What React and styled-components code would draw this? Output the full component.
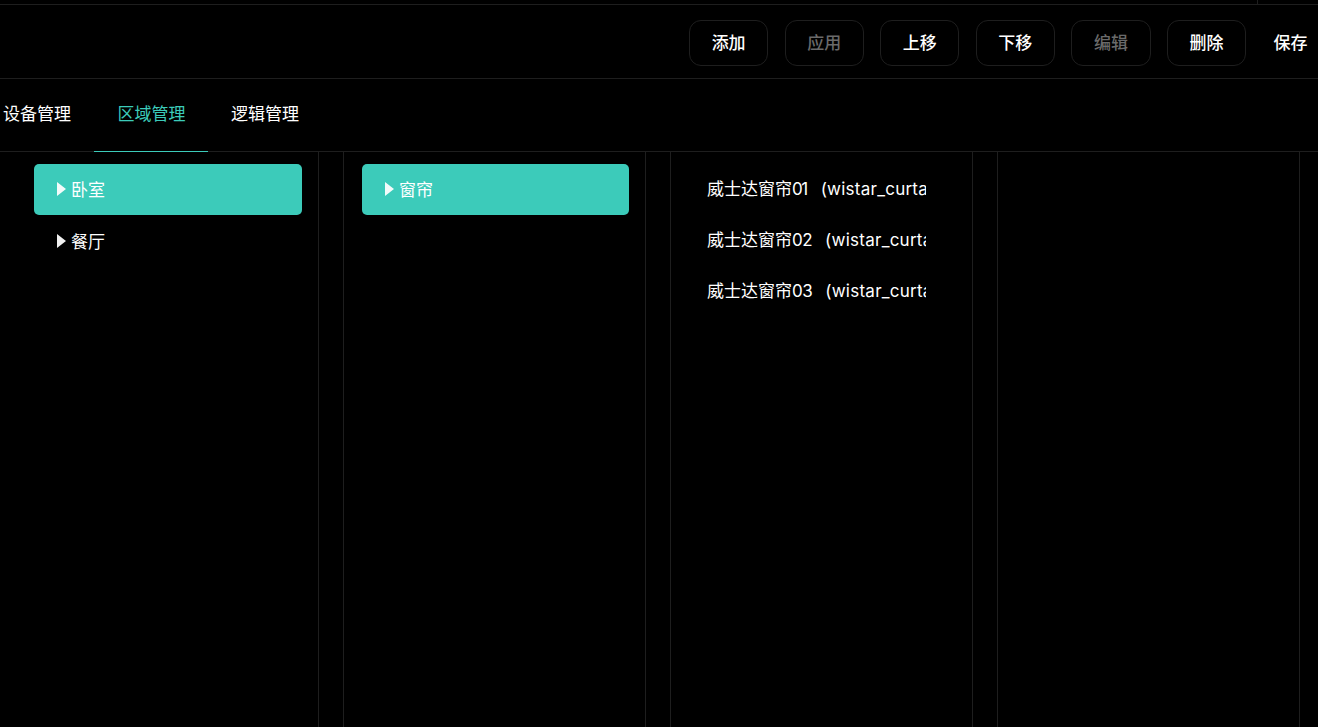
import React from "react";
import styled, { createGlobalStyle } from "styled-components";

const Global = createGlobalStyle`
  html, body { margin: 0; padding: 0; background: #000; height: 100%; overflow: hidden; }
  #root { height: 100%; }
  * { box-sizing: border-box; }
`;
const LINE = "#1e1e1e";
const TEAL = "#3ccbba";
const FONT = `"Inter", "Noto Sans CJK SC", sans-serif`;

const Page = styled.div`
  width: 1318px; height: 727px; background: #000; color: #fff;
  font-family: ${FONT}; font-size: 17px;
  display: flex; flex-direction: column; overflow: hidden;
`;
const TopStrip = styled.div`
  height: 5px; border-bottom: 1px solid ${LINE};
  display: flex; justify-content: flex-end; flex: none;
`;
const StripTick = styled.div`
  width: 1px; height: 4px; background: ${LINE}; margin-right: 60px;
`;
const Toolbar = styled.div`
  height: 74px; flex: none; border-bottom: 1px solid ${LINE};
  display: flex; align-items: flex-start; justify-content: flex-end;
  gap: 16.4px; padding: 15px 10.5px 0 0;
`;
const ToolButton = styled.button`
  width: 79.2px; height: 46px; border-radius: 12px;
  background: transparent; border: 1px solid ${LINE};
  color: ${p => (p.$disabled ? "#6a6a6a" : "#fff")};
  font: inherit; font-weight: 500; padding: 0 0 4px;
`;
const SaveButton = styled.button`
  background: transparent; border: 0; padding: 0 0 4px; margin-left: 11px; height: 46px; color: #fff;
  font: inherit; font-weight: 500;
`;
const Tabs = styled.div`
  height: 73px; flex: none; border-bottom: 1px solid ${LINE};
  display: flex; padding-left: 3px;
`;
const Tab = styled.div`
  position: relative; height: 73px; display: flex; align-items: center; flex: none;
  margin-right: ${p => p.$gap}px; padding-bottom: 7px;
  color: ${p => (p.$active ? TEAL : "#fff")};
  ${p => p.$active && `
    &::after { content: ""; position: absolute; left: -23.5px; right: -22.5px; bottom: 0;
      height: 1px; background: ${TEAL}; }
  `}
`;
const Columns = styled.div`
  flex: 1; display: flex; min-height: 0;
`;
const Column = styled.div`
  flex: none; width: ${p => p.$w}px; margin-right: ${p => p.$mr || 0}px;
  border-right: 1px solid ${LINE};
  border-left: ${p => (p.$first ? "none" : `1px solid ${LINE}`)};
  padding: 12px 16px 0 ${p => p.$pl}px;
`;
const TreeItem = styled.div`
  height: 51px; border-radius: 5px; display: flex; align-items: center; gap: 5px;
  padding: 0 0 2px 23px; margin-bottom: 1px; color: #fff;
  background: ${p => (p.$active ? TEAL : "transparent")};
`;
const Caret = styled.svg`
  width: 9px; height: 14px; flex: none; fill: currentColor; opacity: .94;
`;
const DeviceList = styled.div`
  width: 219px; overflow: hidden;
`;
const Device = styled.div`
  height: 51px; line-height: 52px; white-space: nowrap; overflow: hidden;
  margin-top: ${p => (p.$first ? "-1px" : "0")};
`;
const Digits = styled.span`
  letter-spacing: ${p => p.$tight}px;
`;
const DeviceId = styled.span`
  margin-left: ${p => p.$gap}px; letter-spacing: .25px;
`;

const Arrow = () => (
  <Caret viewBox="0 0 9 14"><path d="M0 0 L9 7 L0 14 Z" /></Caret>
);

export default function App() {
  return (
    <Page>
      <Global />
      <TopStrip><StripTick /></TopStrip>
      <Toolbar>
        <ToolButton>添加</ToolButton>
        <ToolButton $disabled>应用</ToolButton>
        <ToolButton>上移</ToolButton>
        <ToolButton>下移</ToolButton>
        <ToolButton $disabled>编辑</ToolButton>
        <ToolButton>删除</ToolButton>
        <SaveButton>保存</SaveButton>
      </Toolbar>
      <Tabs>
        <Tab $gap={46.5}>设备管理</Tab>
        <Tab $gap={45.5} $active>区域管理</Tab>
        <Tab $gap={0}>逻辑管理</Tab>
      </Tabs>
      <Columns>
        <Column $first $w={319} $mr={24} $pl={34}>
          <TreeItem $active><Arrow />卧室</TreeItem>
          <TreeItem><Arrow />餐厅</TreeItem>
        </Column>
        <Column $w={303} $mr={24} $pl={18}>
          <TreeItem $active><Arrow />窗帘</TreeItem>
        </Column>
        <Column $w={303} $mr={24} $pl={36}>
          <DeviceList>
            <Device $first>威士达窗帘<Digits $tight={-1.5}>01</Digits><DeviceId $gap={14}>(wistar_curtain_01)</DeviceId></Device>
            <Device>威士达窗帘<Digits $tight={-0.5}>02</Digits><DeviceId $gap={13}>(wistar_curtain_02)</DeviceId></Device>
            <Device>威士达窗帘<Digits $tight={-0.5}>03</Digits><DeviceId $gap={13}>(wistar_curtain_03)</DeviceId></Device>
          </DeviceList>
        </Column>
        <Column $w={303} $pl={16} />
      </Columns>
    </Page>
  );
}
